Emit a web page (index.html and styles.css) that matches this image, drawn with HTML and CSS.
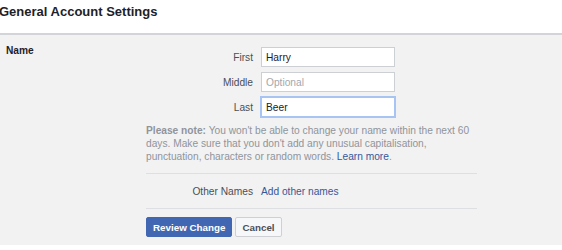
FILE: index.html
```html
<!doctype html>
<html>
<head>
	<meta charset="UTF-8" />
	<title>General Account Settings</title>
	<link rel="stylesheet" href="styles.css">
</head>
<body>

	<div class="header">
		<h2 class="title">General Account Settings</h2>
	</div>

	<div class="panel">
		<div class="sectionName">Name</div>
		<div class="sectionBody">
			<div class="fields">
				<label class="fieldLabel" for="first">First</label>
				<input class="fieldInput" id="first" type="text" value="Harry">
				<label class="fieldLabel" for="middle">Middle</label>
				<input class="fieldInput" id="middle" type="text" placeholder="Optional">
				<label class="fieldLabel" for="last">Last</label>
				<input class="fieldInput fieldFocus" id="last" type="text" value="Beer">
			</div>
			<p class="note"><b>Please note:</b> You won't be able to change your name within the next 60 days. Make sure that you don't add any unusual capitalisation, punctuation, characters or random words. <a href="#">Learn more</a>.</p>
			<div class="otherNames">
				<span class="otherLabel">Other Names</span>
				<a href="#">Add other names</a>
			</div>
			<div class="actions">
				<button class="btn btnPrimary">Review Change</button>
				<button class="btn">Cancel</button>
			</div>
		</div>
	</div>

</body>
</html>
```

FILE: styles.css
```css
body {
	margin: 0;
	font-family: "Liberation Sans", Helvetica, Arial, sans-serif;
	font-size: 10.2px;
	line-height: 13px;
	color: #1d2129;
	background: #fff;
}
a {
	color: #365899;
	text-decoration: none;
}
.header {
	height: 35px;
	box-sizing: border-box;
	padding: 4px 0 0 0;
	border-bottom: 2px solid #d3d4d8;
}
.title {
	margin: 0 0 0 -1px;
	font-size: 13px;
	line-height: 16px;
	font-weight: bold;
	color: #1d2129;
}
.panel {
	display: grid;
	grid-template-columns: 140px 331px;
	padding: 9px 0 9px 6px;
	background: #f2f2f2;
	height: 210px;
	box-sizing: border-box;
}
.sectionName {
	font-weight: bold;
}
.fields {
	display: grid;
	grid-template-columns: 107px 134px;
	column-gap: 8px;
	row-gap: 5px;
	align-items: center;
	margin-top: 3px;
}
.fieldLabel {
	text-align: right;
	color: #4b4f56;
}
.fieldInput {
	height: 20px;
	box-sizing: border-box;
	margin: 0;
	padding: 0 4px;
	border: 1px solid #ccd0d5;
	background: #fff;
	font-family: inherit;
	font-size: 10.2px;
	color: #1d2129;
	outline: none;
}
.fieldInput::placeholder {
	color: #a4a7ad;
}
.fieldFocus {
	border-color: #a8c4f3;
	box-shadow: 0 0 0 1px #a8c4f3;
}
.note {
	margin: 7px 0 0 0;
	color: #90949c;
	line-height: 13px;
}
.note b {
	font-weight: bold;
}
.otherNames {
	display: grid;
	grid-template-columns: 107px auto;
	column-gap: 8px;
	align-items: center;
	height: 34px;
	margin-top: 10px;
	border-top: 1px solid #dddfe2;
	border-bottom: 1px solid #dddfe2;
}
.otherLabel {
	text-align: right;
	color: #4b4f56;
}
.actions {
	display: flex;
	gap: 3px;
	margin-top: 8px;
}
.btn {
	height: 20px;
	box-sizing: border-box;
	margin: 0;
	padding: 0 6px;
	border: 1px solid #ced0d4;
	border-radius: 2px;
	background: #f6f7f9;
	font-family: inherit;
	font-size: 9.8px;
	font-weight: bold;
	color: #4b4f56;
}
.btnPrimary {
	border-color: #4267b2;
	background: #4267b2;
	color: #fff;
}
```
